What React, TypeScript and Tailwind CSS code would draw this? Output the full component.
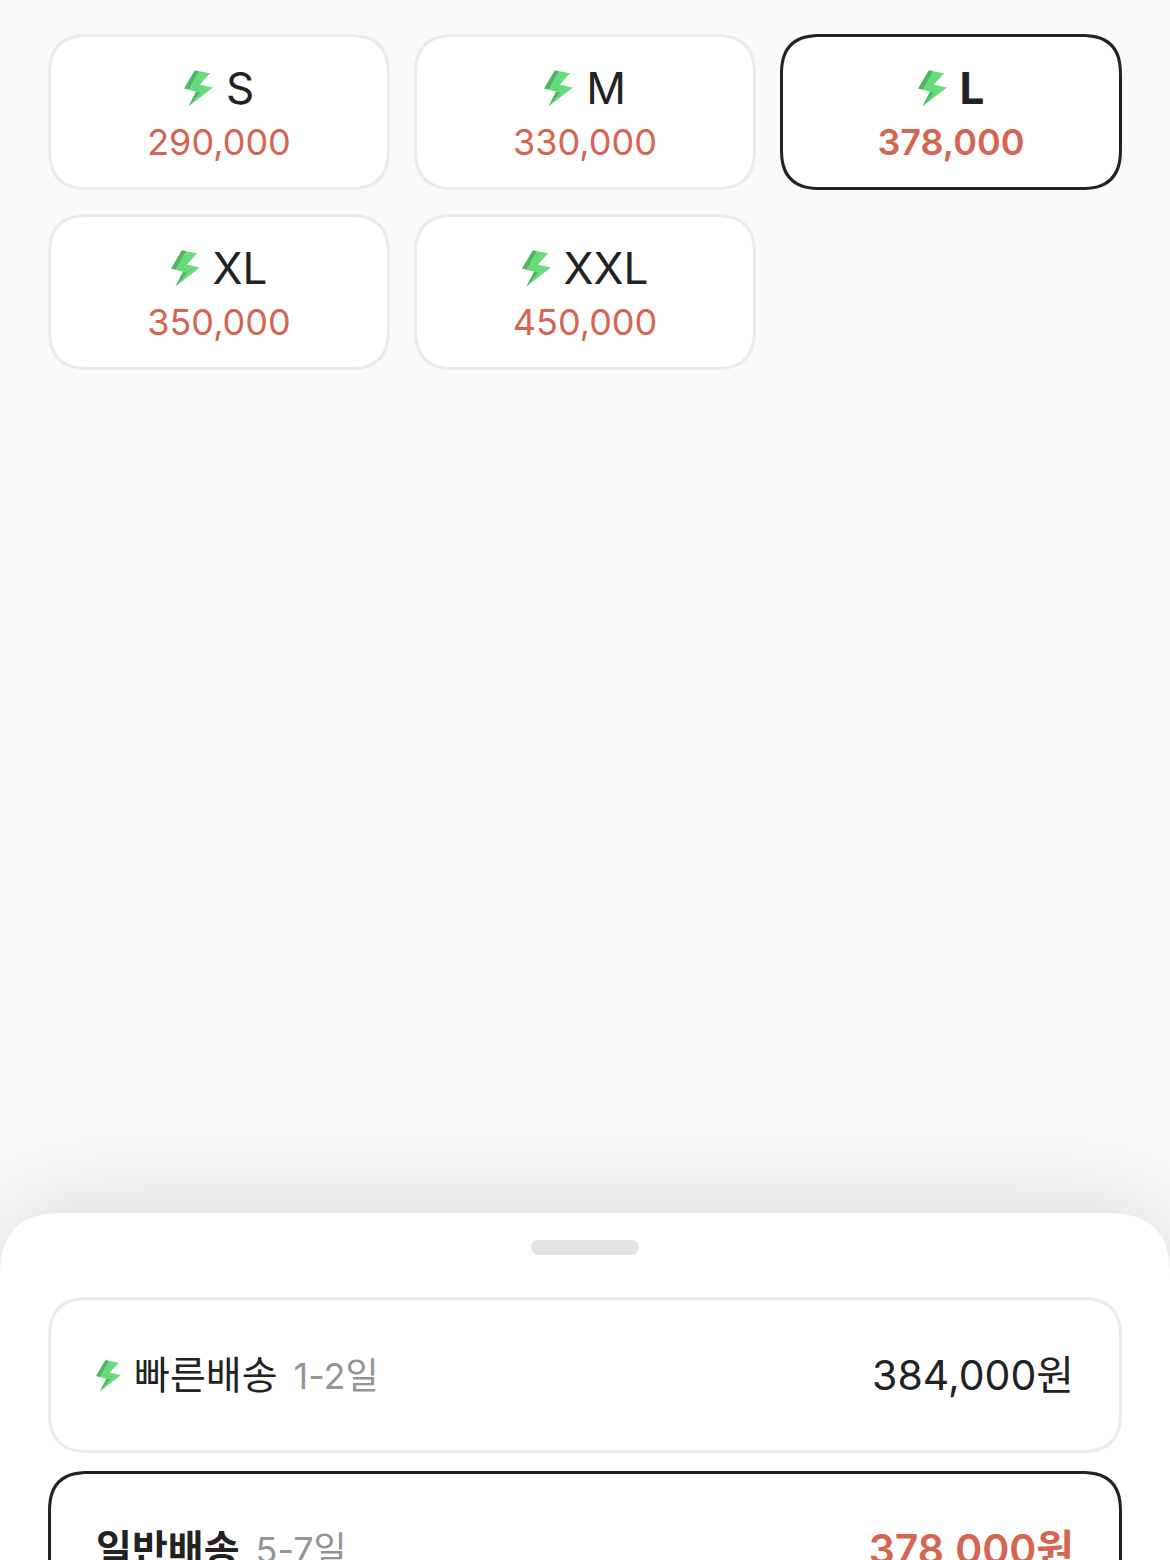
import { useState } from 'react';
import clsx from 'clsx';

const SIZES = [
  { name: 'S', price: '290,000' },
  { name: 'M', price: '330,000' },
  { name: 'L', price: '378,000' },
  { name: 'XL', price: '350,000' },
  { name: 'XXL', price: '450,000' },
];

const DELIVERIES = [
  { key: 'fast', name: '빠른배송', days: '1-2일', price: '384,000원', fast: true },
  { key: 'normal', name: '일반배송', days: '5-7일', price: '378,000원', fast: false },
];

// smooth corners where the browser has them, plain ones elsewhere
const CARD =
  'h-[156px] border-3 bg-white rounded-[32px] supports-[corner-shape:squircle]:rounded-[42px] [corner-shape:superellipse(1.4)]';

function Bolt({ className }: { className: string }) {
  return (
    <svg viewBox="0 0 30 38" className={className} aria-hidden="true">
      <path d="M10.8 1.4 26.1 4.2 15.8 15.8 28.8 18.5 4.5 37.6 12.1 22.8 0.2 19.6Z" fill="#65db79" />
      <path d="M10.8 1.4 14.9 2.1 4.5 20.5 0.2 19.6Z" fill="#52b266" />
      <path d="M12.1 22.8 16.1 23.7 4.5 37.6Z" fill="#52b266" />
    </svg>
  );
}

export default function App() {
  const [size, setSize] = useState('L');
  const [delivery, setDelivery] = useState('normal');

  return (
    <div className="flex h-screen flex-col overflow-hidden bg-[#fafafa] font-['Inter','Noto_Sans_CJK_KR',sans-serif] text-[#222]">
      {/* Size grid */}
      <main className="grid flex-1 grid-cols-3 content-start gap-6 px-12 pt-[34px]">
        {SIZES.map((item) => {
          const active = item.name === size;
          return (
            <button
              key={item.name}
              type="button"
              aria-pressed={active}
              onClick={() => setSize(item.name)}
              className={clsx(
                CARD,
                'flex flex-col items-center justify-center pt-1',
                active ? 'border-[#222]' : 'border-[#ebebeb]',
              )}
            >
              <span className="flex items-center gap-3">
                <Bolt className="h-[38px] w-[30px]" />
                <span className={clsx('text-[44px] leading-[56px]', active && 'font-bold')}>{item.name}</span>
              </span>
              <span className={clsx('text-[36px] leading-[52px] text-[#d46551]', active && 'font-semibold')}>
                {item.price}
              </span>
            </button>
          );
        })}
      </main>

      {/* Delivery sheet */}
      <section className="h-[347px] shrink-0 rounded-t-[52px] bg-white px-12 pt-[27px] shadow-[0_0_110px_rgba(0,0,0,0.15)] [corner-shape:superellipse(1.4)] supports-[corner-shape:squircle]:rounded-t-[66px]">
        <div className="mx-auto h-[15px] w-[108px] rounded-full bg-[#e3e3e3]" />
        <div className="mt-[42px] flex flex-col gap-[18px]">
          {DELIVERIES.map((item) => {
            const active = item.key === delivery;
            return (
              <button
                key={item.key}
                type="button"
                aria-pressed={active}
                onClick={() => setDelivery(item.key)}
                className={clsx(
                  CARD,
                  'flex items-center justify-between px-[45px]',
                  active ? 'border-[#222]' : 'border-[#ebebeb]',
                )}
              >
                <span className="flex items-center gap-3">
                  {item.fast && <Bolt className="h-[33px] w-[26px]" />}
                  <span className="flex items-baseline gap-4">
                    <span className={clsx('text-[39px] leading-[56px]', active && 'font-bold')}>{item.name}</span>
                    <span className="text-[36px] leading-[56px] text-[#949494]">{item.days}</span>
                  </span>
                </span>
                <span className={clsx('text-[41px] leading-[56px]', active && 'font-semibold text-[#d46551]')}>
                  {item.price}
                </span>
              </button>
            );
          })}
        </div>
      </section>
    </div>
  );
}
